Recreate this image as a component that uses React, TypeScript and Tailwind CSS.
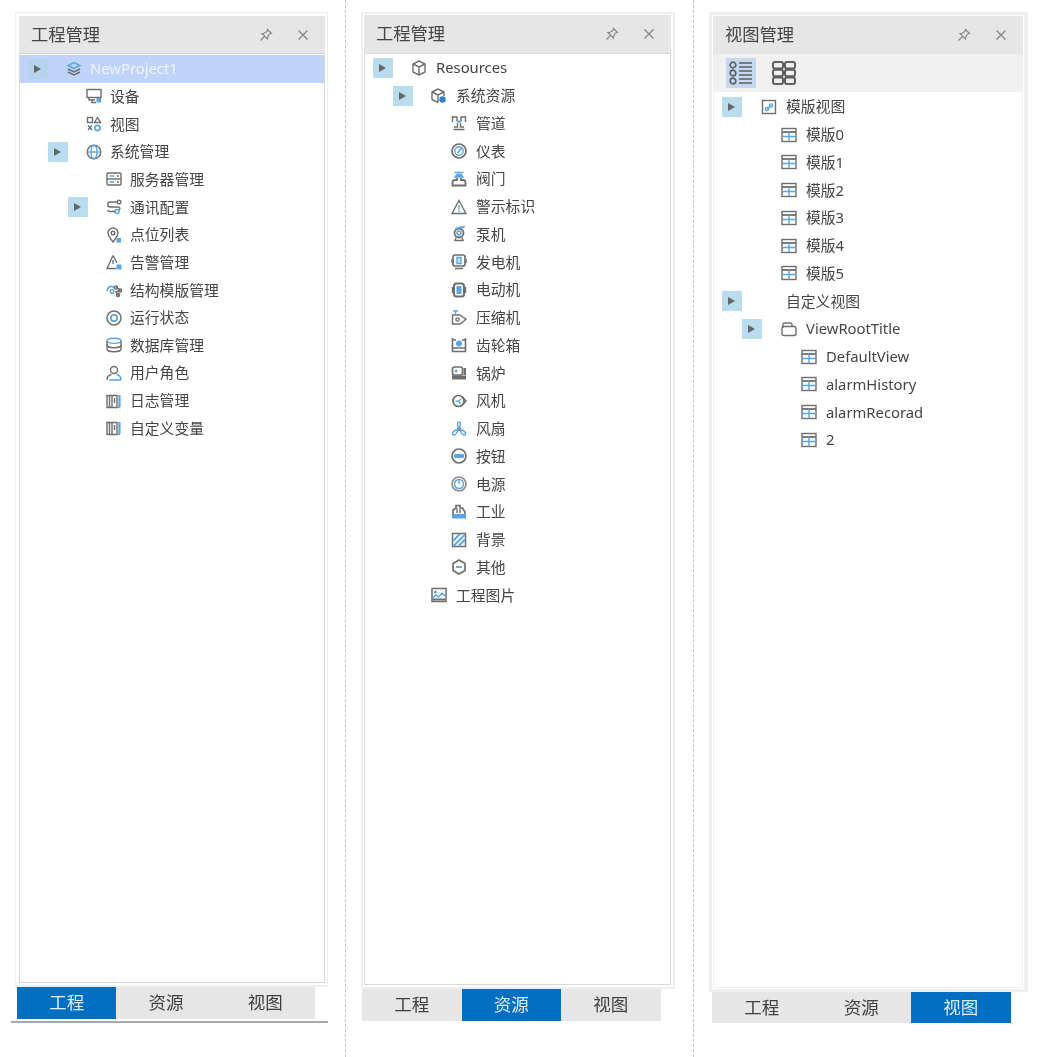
import React from "react";

const G = "#6e6e6e";
const B = "#5aa5e3";

const S = ({ children }: { children: React.ReactNode }) => (
  <svg width="16" height="16" viewBox="0 0 16 16" fill="none" stroke={G} strokeWidth="1.4" className="shrink-0">
    {children}
  </svg>
);

const icons: Record<string, React.ReactNode> = {
  layers: (
    <>
      <path d="M8 1.5 14 4.5 8 7.5 2 4.5Z" stroke={B} />
      <path d="M2 8 8 11 14 8" />
      <path d="M2 11 8 14 14 11" />
    </>
  ),
  device: (
    <>
      <rect x="1" y="1.5" width="14" height="8" />
      <path d="M3 9.5V12H9M5 14.5H10M6 12V14.5" />
      <rect x="10.5" y="10" width="4.5" height="4.5" fill={B} stroke="none" />
    </>
  ),
  view: (
    <>
      <rect x="1.5" y="1.5" width="5" height="5" />
      <path d="M11.5 1.5 14.5 6.5H8.5Z" />
      <path d="M2 9.5 6 14M6 9.5 2 14" />
      <circle cx="11.5" cy="12" r="2.6" stroke={B} strokeWidth="1.7" />
    </>
  ),
  globe: (
    <>
      <circle cx="8" cy="8" r="6.8" />
      <ellipse cx="8" cy="8" rx="3" ry="6.8" stroke={B} />
      <path d="M1.5 8H14.5" stroke={B} />
    </>
  ),
  server: (
    <>
      <rect x="1" y="2" width="14" height="12" rx="1" />
      <path d="M1 8H15" />
      <path d="M3.5 5H8M3.500 11H8" stroke={B} strokeWidth="1.6" />
      <path d="M11 5H13M11 11H13" />
    </>
  ),
  route: (
    <>
      <circle cx="13" cy="3" r="1.8" />
      <circle cx="11" cy="12.5" r="2" stroke={B} strokeWidth="1.5" />
      <path d="M11 3H4C1 3 1 8 4 8H11C14.500 8 14.500 10 13 11" />
      <path d="M9 12.500H4C2.500 12.500 2 12 2 11" />
    </>
  ),
  pin: (
    <>
      <path d="M7 15C4 11 2 8.600 2 6A5 5 0 0 1 12 6C12 8.600 10 11 7 15Z" />
      <circle cx="7" cy="6" r="1.800" />
      <rect x="10.500" y="11" width="4.500" height="4.500" fill={B} stroke="none" />
    </>
  ),
  alarm: (
    <>
      <path d="M7 1.500 1 14.500H10M7 1.500 11 9" />
      <path d="M7 6V10" />
      <rect x="10.500" y="10.500" width="5" height="5" fill={B} stroke="none" />
    </>
  ),
  struct: (
    <>
      <path d="M1 9C2 4 6 3 8 6" stroke={B} strokeWidth="1.700" />
      <circle cx="6" cy="9.500" r="1.800" stroke={B} />
      <path d="M10 5 14 8 10 10 13 14" />
      <circle cx="10" cy="5.500" r="1.500" />
      <circle cx="14" cy="8.500" r="1.500" />
      <circle cx="12" cy="13" r="1.500" />
    </>
  ),
  status: (
    <>
      <circle cx="8" cy="8" r="7" strokeWidth="1.500" />
      <circle cx="8" cy="8" r="3.200" stroke={B} strokeWidth="1.700" />
    </>
  ),
  db: (
    <>
      <ellipse cx="8" cy="3.800" rx="7" ry="2.600" stroke={B} />
      <path d="M1 4V12C1 13.500 4 14.800 8 14.800S15 13.500 15 12V4" />
      <path d="M1 8C1 9.500 4 10.800 8 10.800S15 9.500 15 8" />
    </>
  ),
  user: (
    <>
      <circle cx="8" cy="5" r="3.500" />
      <path d="M1 15C1 11.500 3 10 5.500 9.500" />
      <path d="M15 15C15 11.500 13 10 10.500 9.500M3 15H15" stroke={B} strokeWidth="1.600" />
    </>
  ),
  log: (
    <>
      <path d="M1 2.500H11V14.500H1Z" />
      <path d="M3.500 2.500V14.500M6 2.500V14.500" />
      <path d="M8.500 5V10" />
      <path d="M13.500 2V13L12.800 15" stroke={B} strokeWidth="2.200" />
    </>
  ),
  cube: (
    <>
      <path d="M8 1 14 4V12L8 15 2 12V4Z" />
      <path d="M2 4 8 7 14 4M8 7V15" />
    </>
  ),
  cubeDot: (
    <>
      <path d="M7 1 13 4V8M7 14.500 1 11.500V4L7 1" />
      <path d="M1 4 7 7 13 4M7 7V14.500" />
      <circle cx="11.500" cy="11.500" r="3.200" fill="#2f80d0" stroke="none" />
    </>
  ),
  pipe: (
    <>
      <path d="M1.500 2H6V6.500M14.500 2H10V6.500" />
      <path d="M1.500 1V7M14.500 1V7" />
      <path d="M6 6.500H10" stroke={B} strokeWidth="2" />
      <path d="M6.500 8V12H3M9.500 8V12H13M2.500 14.500H13.500" />
    </>
  ),
  gauge: (
    <>
      <circle cx="8" cy="8" r="7" strokeWidth="1.700" />
      <circle cx="8" cy="8" r="4.200" stroke={B} />
      <path d="M6.500 10 11 5" stroke={B} strokeWidth="1.700" />
    </>
  ),
  valve: (
    <>
      <path d="M3.500 1.500H12.500M4 6H12L10 3.500H6Z" stroke={B} fill={B} />
      <path d="M6 7V9H4C2.500 9 1.500 10 1.500 11.500V14.500H14.500V11.500C14.500 10 13.500 9 12 9H10V7" strokeWidth="1.800" />
    </>
  ),
  warn: (
    <>
      <path d="M8 1.500 15 14.500H1Z" />
      <path d="M8 6V10.500M8 11.500V13" stroke={B} />
    </>
  ),
  pump: (
    <>
      <circle cx="8" cy="7" r="4.500" strokeWidth="1.800" />
      <circle cx="8" cy="7" r="2" stroke={B} strokeWidth="1.500" />
      <path d="M8 1.500 14 0.500M4.500 2.500 13 1" stroke={B} />
      <path d="M5 11.500 4 14.500H12L11 11.500" />
    </>
  ),
  generator: (
    <>
      <rect x="2" y="1" width="12" height="11" rx="2" strokeWidth="1.700" />
      <path d="M6 3.500H10V9.500H6Z" stroke={B} fill="#cfe6f8" />
      <path d="M1 5V9M15 5V9M4 14.500H12" />
    </>
  ),
  motor: (
    <>
      <rect x="3" y="1.500" width="10" height="13" rx="2.500" strokeWidth="2" />
      <rect x="5.500" y="4" width="5" height="8" fill={B} stroke="none" />
      <path d="M1.500 5V11M14.500 5V11" />
    </>
  ),
  compressor: (
    <>
      <path d="M2 1H7M4.500 1V4" stroke={B} />
      <path d="M1.500 5H9L13 8L15 9L13 11L9 14H1.500Z" />
      <circle cx="6.500" cy="9.500" r="1.600" />
    </>
  ),
  gearbox: (
    <>
      <path d="M1.500 1V14.500H14.500V1" strokeWidth="1.600" />
      <path d="M1.500 3H5M14.500 3H11M1.500 11H14.500" />
      <circle cx="8" cy="6.500" r="3" fill={B} stroke="none" />
    </>
  ),
  boiler: (
    <>
      <rect x="1.500" y="2" width="10" height="8" rx="2" strokeWidth="1.700" />
      <circle cx="5" cy="6" r="1.500" fill={B} stroke="none" />
      <rect x="12.500" y="3" width="2.500" height="7" fill={G} stroke="none" />
      <rect x="1" y="10.500" width="14" height="4" fill={G} stroke="none" />
    </>
  ),
  blower: (
    <>
      <circle cx="7.500" cy="8" r="5.500" strokeWidth="1.700" />
      <path d="M11 3.500 15 8 11 12.500" strokeWidth="1.500" />
      <path d="M7.500 8 10 6M7.500 8 9.500 10.500M7.500 8 4.500 8.500" stroke={B} />
    </>
  ),
  fan: (
    <>
      <circle cx="8" cy="8" r="1.300" />
      <path d="M8 6.500C5.500 4.500 6.500 1 8 1S10.500 4.500 8 6.500Z" stroke={B} strokeWidth="1.500" />
      <path d="M6.800 9C4 8.500 1 11 1.500 13S6 14 6.800 9Z" stroke={B} strokeWidth="1.500" />
      <path d="M9.200 9C12 8.500 15 11 14.500 13S10 14 9.200 9Z" stroke={B} strokeWidth="1.500" />
    </>
  ),
  button: (
    <>
      <circle cx="8" cy="8" r="7" strokeWidth="1.700" />
      <rect x="3" y="6" width="10" height="4" rx="1" fill={B} stroke="none" />
    </>
  ),
  power: (
    <>
      <circle cx="8" cy="8" r="7" strokeWidth="1.700" stroke="#8f8f8f" />
      <circle cx="8" cy="8" r="4.500" stroke={B} strokeWidth="1.500" />
      <path d="M8 4.500V8" stroke={B} strokeWidth="1.500" />
    </>
  ),
  industry: (
    <>
      <path d="M2 10V6L5 4V1.500H9V4H11.500L14 8V10" strokeWidth="1.700" />
      <path d="M6 4V9M9 5V9" />
      <rect x="1" y="10" width="14" height="4.500" fill={B} stroke="none" />
    </>
  ),
  background: (
    <>
      <rect x="1.500" y="1.500" width="13" height="13" strokeWidth="1.500" />
      <path d="M2 9 9 2M2.500 14 14 2.500M7.500 14 14 7.500" stroke={B} strokeWidth="1.800" />
    </>
  ),
  other: (
    <>
      <path d="M8 1 14 4.500V11.500L8 15 2 11.500V4.500Z" strokeWidth="1.700" />
      <path d="M5 8H11" stroke={B} strokeWidth="1.800" />
    </>
  ),
  image: (
    <>
      <rect x="1" y="1.500" width="14" height="13" strokeWidth="1.500" />
      <circle cx="4.500" cy="5" r="1.500" fill={B} stroke="none" />
      <path d="M1.500 11 5 8 7.500 10 11 6 14.500 9.500" stroke={B} />
      <path d="M1.500 12.500H14.500" strokeWidth="2" />
    </>
  ),
  link: (
    <>
      <rect x="1.500" y="1.500" width="13" height="13" />
      <path d="M6 10.500 10 6.500" stroke={B} strokeWidth="1.300" />
      <circle cx="6" cy="10" r="1.600" stroke={B} />
      <circle cx="10" cy="6.500" r="1.600" stroke={B} />
    </>
  ),
  table: (
    <>
      <rect x="1" y="1.500" width="14" height="13" />
      <path d="M1 5H15" strokeWidth="1.800" />
      <path d="M1 9.500H15M8 5V14.500" stroke={B} />
    </>
  ),
  folder: (
    <>
      <path d="M2 7V3.500C2 2.500 2.500 2 3.500 2H9.500C10.500 2 11 2.500 11 3.500V5" />
      <rect x="1" y="5.500" width="14" height="9" rx="2" />
    </>
  ),
};

type Node = { level: number; arrow?: boolean; icon?: string; label: string; selected?: boolean };

const P1: Node[] = [
  { level: 0, arrow: true, icon: "layers", label: "NewProject1", selected: true },
  { level: 1, icon: "device", label: "设备" },
  { level: 1, icon: "view", label: "视图" },
  { level: 1, arrow: true, icon: "globe", label: "系统管理" },
  { level: 2, icon: "server", label: "服务器管理" },
  { level: 2, arrow: true, icon: "route", label: "通讯配置" },
  { level: 2, icon: "pin", label: "点位列表" },
  { level: 2, icon: "alarm", label: "告警管理" },
  { level: 2, icon: "struct", label: "结构模版管理" },
  { level: 2, icon: "status", label: "运行状态" },
  { level: 2, icon: "db", label: "数据库管理" },
  { level: 2, icon: "user", label: "用户角色" },
  { level: 2, icon: "log", label: "日志管理" },
  { level: 2, icon: "log", label: "自定义变量" },
];

const P2: Node[] = [
  { level: 0, arrow: true, icon: "cube", label: "Resources" },
  { level: 1, arrow: true, icon: "cubeDot", label: "系统资源" },
  { level: 2, icon: "pipe", label: "管道" },
  { level: 2, icon: "gauge", label: "仪表" },
  { level: 2, icon: "valve", label: "阀门" },
  { level: 2, icon: "warn", label: "警示标识" },
  { level: 2, icon: "pump", label: "泵机" },
  { level: 2, icon: "generator", label: "发电机" },
  { level: 2, icon: "motor", label: "电动机" },
  { level: 2, icon: "compressor", label: "压缩机" },
  { level: 2, icon: "gearbox", label: "齿轮箱" },
  { level: 2, icon: "boiler", label: "锅炉" },
  { level: 2, icon: "blower", label: "风机" },
  { level: 2, icon: "fan", label: "风扇" },
  { level: 2, icon: "button", label: "按钮" },
  { level: 2, icon: "power", label: "电源" },
  { level: 2, icon: "industry", label: "工业" },
  { level: 2, icon: "background", label: "背景" },
  { level: 2, icon: "other", label: "其他" },
  { level: 1, icon: "image", label: "工程图片" },
];

const P3: Node[] = [
  { level: 0, arrow: true, icon: "link", label: "模版视图" },
  { level: 1, icon: "table", label: "模版0" },
  { level: 1, icon: "table", label: "模版1" },
  { level: 1, icon: "table", label: "模版2" },
  { level: 1, icon: "table", label: "模版3" },
  { level: 1, icon: "table", label: "模版4" },
  { level: 1, icon: "table", label: "模版5" },
  { level: 0, arrow: true, label: "自定义视图" },
  { level: 1, arrow: true, icon: "folder", label: "ViewRootTitle" },
  { level: 2, icon: "table", label: "DefaultView" },
  { level: 2, icon: "table", label: "alarmHistory" },
  { level: 2, icon: "table", label: "alarmRecorad" },
  { level: 2, icon: "table", label: "2" },
];

const Row = ({ n, size, iconGap, labelGap }: { n: Node; size: string; iconGap: string; labelGap: string }) => (
  <div className={`flex items-center pl-2 ${size} ${n.selected ? "bg-[#c0d4fa] text-[#eef3ff]" : "text-[#454545]"}`}>
    <div style={{ width: n.level * 20 }} className="shrink-0" />
    <div className={`flex h-5 w-5 shrink-0 items-center justify-center ${n.arrow ? (n.selected ? "bg-[#b5d3ea]" : "bg-[#b9dcef]") : ""}`}>
      {n.arrow && <div className="mr-[2px] h-0 w-0 border-y-[4.5px] border-l-[7px] border-y-transparent border-l-[#666666]" />}
    </div>
    <div className={`flex shrink-0 items-center ${iconGap} ${labelGap}`}>{n.icon && <S>{icons[n.icon]}</S>}</div>
    <span className="whitespace-nowrap text-[14.8px] leading-none">{n.label}</span>
  </div>
);

const Header = ({ title, size }: { title: string; size: string }) => (
  <div className={`flex shrink-0 items-center bg-[#e6e6e6] pl-3 pr-4 ${size}`}>
    <span className="flex-1 text-[17.3px] leading-none text-[#454545]">{title}</span>
    <svg width="14" height="14" viewBox="0 0 14 14" fill="none" stroke="#8a8a8a" strokeWidth="1.200">
      <path d="M8.500 1.500 12.500 5.500 10.500 6 8.500 9.500 8.500 11 3 5.500 4.500 5.500 8 3.500Z" />
      <path d="M5.500 8.500 1.500 12.500" />
    </svg>
    <svg className="ml-6" width="12" height="12" viewBox="0 0 12 12" fill="none" stroke="#8a8a8a" strokeWidth="1.400">
      <path d="M1.500 1.500 10.500 10.500M10.500 1.500 1.500 10.500" />
    </svg>
  </div>
);

const Tabs = ({ active, className }: { active: number; className: string }) => (
  <div className={`flex shrink-0 bg-[#e6e6e6] ${className}`}>
    {["工程", "资源", "视图"].map((t, i) => (
      <div
        key={t}
        className={`flex w-[99.500px] items-center justify-center text-[17.500px] leading-none ${i === active ? "bg-[#006fc1] text-[#dcecfb]" : "text-[#404040]"}`}
      >
        {t}
      </div>
    ))}
  </div>
);

const ListIcon = () => (
  <svg width="24" height="24" viewBox="0 0 24 24" fill="none" stroke="#5f5f5f" strokeWidth="1.700">
    <circle cx="4" cy="4" r="2.800" />
    <circle cx="4" cy="12" r="2.800" />
    <circle cx="4" cy="20" r="2.800" />
    <path d="M10 2H23M10 6H23M10 10H23M10 14H23M10 18H23M10 22H23" strokeWidth="1.400" />
  </svg>
);

const GridIcon = () => (
  <svg width="24" height="24" viewBox="0 0 24 24" fill="none" stroke="#5f5f5f" strokeWidth="2">
    <rect x="1" y="1" width="10" height="6.500" rx="2" />
    <rect x="13" y="1" width="10" height="6.500" rx="2" />
    <rect x="1" y="8.750" width="10" height="6.500" rx="2" />
    <rect x="13" y="8.750" width="10" height="6.500" rx="2" />
    <rect x="1" y="16.500" width="10" height="6.500" rx="2" />
    <rect x="13" y="16.500" width="10" height="6.500" rx="2" />
  </svg>
);

export default function App() {
  return (
    <div
      className="flex h-[1057px] w-[1044px] overflow-hidden bg-white blur-[0.4px]"
      style={{ fontFamily: '"Noto Sans", "Noto Sans CJK SC", sans-serif' }}
    >
      {/* Panel 1 */}
      <div className="flex w-[346px] shrink-0 flex-col border-r border-dashed border-[#c4c4c4] pl-[11px] pt-3">
        <div className="ml-1 flex h-[975px] w-[313px] flex-col border border-b-2 border-[#efefef] pl-[3px] pr-[2px] pt-[3px] pb-[2px]">
          <Header title="工程管理" size="h-[37px]" />
          <div className="flex-1 border border-[#d8d8d8] bg-white pt-[1px]">
            {P1.map((n) => (
              <Row key={n.label} n={n} size="h-[27.650px]" iconGap="ml-[18px]" labelGap="w-6" />
            ))}
          </div>
        </div>
        <Tabs active={0} className="ml-[6px] h-8 w-[298px]" />
        <div className="mt-[2px] h-[2px] w-[317px] bg-[#a8a8a8]" />
      </div>

      {/* Panel 2 */}
      <div className="flex w-[348px] shrink-0 flex-col border-r border-dashed border-[#c4c4c4] pl-[15px] pt-3">
        <div className="flex h-[977px] w-[314px] flex-col border-2 border-[#efefef] px-[1px] pt-[1px] pb-[2px] pr-[2px]">
          <Header title="工程管理" size="h-[38px]" />
          <div className="flex-1 border border-[#d8d8d8] bg-white">
            {P2.map((n) => (
              <Row key={n.label} n={n} size="h-[27.750px]" iconGap="ml-[18px]" labelGap="w-[25px]" />
            ))}
          </div>
        </div>
        <Tabs active={1} className="ml-px h-8 w-[298.500px]" />
      </div>

      {/* Panel 3 */}
      <div className="flex flex-1 flex-col pl-[15px] pt-3">
        <div className="flex h-[980px] w-[319px] flex-col border-[3px] border-r-4 border-[#efefef] px-[1px] pt-[1px] pb-[1px]">
          <Header title="视图管理" size="h-[38px]" />
          <div className="flex h-[38px] shrink-0 items-center bg-[#f0f0f0] pl-[13px]">
            <div className="flex h-[30px] w-[30px] items-center justify-center bg-[#c5d8ef]">
              <ListIcon />
            </div>
            <div className="ml-4">
              <GridIcon />
            </div>
          </div>
          <div className="flex-1 border border-t-0 border-[#f0f0f0] bg-white pt-[1px]">
            {P3.map((n) => (
              <Row key={n.label + n.level} n={n} size="h-[27.750px]" iconGap="ml-[19px]" labelGap="w-[25px]" />
            ))}
          </div>
        </div>
        <Tabs active={2} className="ml-[3px] h-[31px] w-[299px]" />
      </div>
    </div>
  );
}
